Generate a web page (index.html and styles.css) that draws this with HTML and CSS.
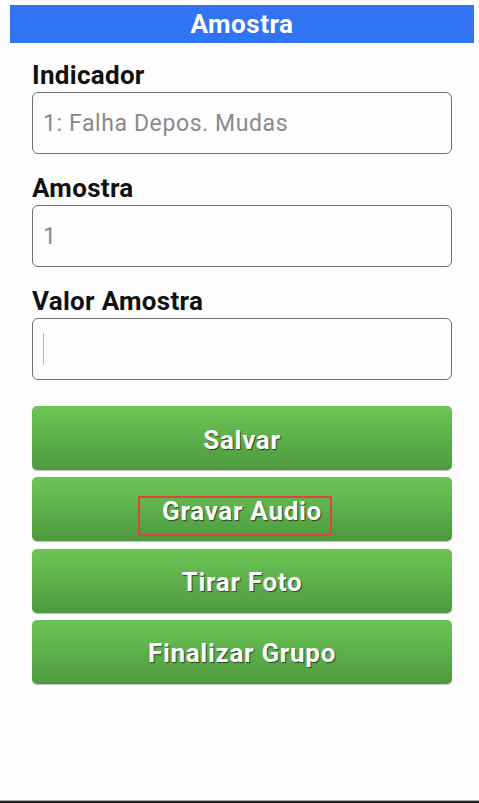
FILE: index.html
```html
<!DOCTYPE html>
<html lang="pt">

<head>
  <meta charset="UTF-8">
  <meta name="viewport" content="width=device-width, initial-scale=1.0">
  <title>Amostra</title>
  <link rel="stylesheet" href="styles.css">
</head>

<body>
  <header class="title-bar">
    <h1 class="title-text">Amostra</h1>
  </header>

  <main class="sample-form">
    <div class="field">
      <label class="field-label">Indicador</label>
      <div class="field-box">1: Falha Depos. Mudas</div>
    </div>

    <div class="field">
      <label class="field-label">Amostra</label>
      <div class="field-box">1</div>
    </div>

    <div class="field">
      <label class="field-label">Valor Amostra</label>
      <div class="field-box"><span class="caret"></span></div>
    </div>

    <div class="actions">
      <button class="action-button">Salvar</button>
      <button class="action-button">Gravar Audio<span class="highlight"></span></button>
      <button class="action-button">Tirar Foto</button>
      <button class="action-button">Finalizar Grupo</button>
    </div>
  </main>

  <div class="screen-edge"></div>
</body>

</html>
```

FILE: styles.css
```css
/* Page */
html,
body {
  height: 100%;
}

body {
  margin: 0;
  display: flex;
  flex-direction: column;
  font-family: Roboto, 'Liberation Sans', sans-serif;
  background-color: #fdfefd;
  color: #111111;
}

/* Title bar */
.title-bar {
  margin: 5px 5px 0 10px;
  height: 38px;
  background-color: #3074f3;
  display: flex;
  align-items: center;
  justify-content: center;
}

.title-text {
  margin: 0;
  font-size: 26px;
  font-weight: 700;
  line-height: 30px;
  letter-spacing: 0.5px;
  color: #ffffff;
}

/* Form */
.sample-form {
  padding: 17px 27px 0 32px;
}

.field {
  margin-bottom: 19px;
}

.field-label {
  display: block;
  font-size: 26px;
  font-weight: 700;
  line-height: 30px;
  letter-spacing: 0.3px;
  margin-bottom: 2px;
}

.field-box {
  box-sizing: border-box;
  height: 62px;
  border: 1.5px solid #707070;
  border-radius: 6px;
  padding: 0 10px;
  display: flex;
  align-items: center;
  font-size: 23px;
  letter-spacing: 0.6px;
  color: #8a8a8a;
}

.caret {
  width: 1px;
  height: 32px;
  background-color: #b8b8b8;
}

/* Buttons */
.actions {
  margin-top: 26px;
  display: flex;
  flex-direction: column;
  gap: 7.3px;
}

.action-button {
  position: relative;
  height: 64px;
  padding: 3px 0 0;
  border: none;
  border-radius: 5px;
  background: linear-gradient(#6cc656, #4e993f);
  box-shadow: 0 1px 1px rgba(0, 0, 0, 0.25);
  font-family: Roboto, 'Liberation Sans', sans-serif;
  font-size: 26px;
  font-weight: 700;
  letter-spacing: 0.7px;
  color: #ffffff;
  text-shadow: 1px 1px 1px rgba(0, 0, 0, 0.6);
}

/* annotation box drawn over the button label */
.highlight {
  position: absolute;
  left: 106px;
  top: 19px;
  width: 194px;
  height: 40px;
  box-sizing: border-box;
  border: 2px solid #e2413f;
}

/* Bottom edge of the screen */
.screen-edge {
  margin-top: auto;
  height: 2px;
  border-top: 1px solid #b0b0b0;
  background-color: #222222;
}
```
